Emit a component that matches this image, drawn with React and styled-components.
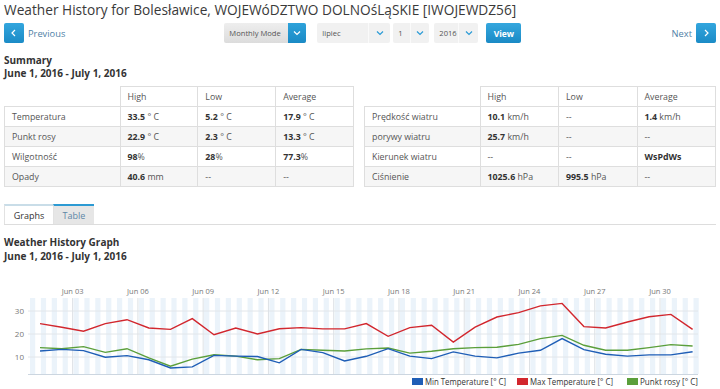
import React from "react";
import styled, { createGlobalStyle } from "styled-components";

const GlobalStyle = createGlobalStyle`
  body {
    margin: 0;
    background: #fff;
    font-family: "Open Sans", "Liberation Sans", sans-serif;
    color: #333;
  }
`;

const Page = styled.div`
  width: 720px;
  height: 389px;
  overflow: hidden;
  padding: 0 4px;
  box-sizing: border-box;
`;

const Title = styled.h1`
  margin: 0;
  font-size: 13.7px;
  line-height: 20px;
  font-weight: 400;
  color: #3a3a3a;
  white-space: nowrap;
`;

const NavRow = styled.div`
  display: flex;
  align-items: center;
  height: 20px;
  margin-top: 3px;
`;

const PageLink = styled.a`
  display: flex;
  align-items: center;
  gap: 4px;
  font-size: 9.3px;
  color: #4f7fa6;
  text-decoration: none;
  margin-left: ${(p) => (p.$right ? "auto" : "0")};
`;

const ArrowButton = styled.span`
  width: 20px;
  height: 20px;
  border-radius: 2px;
  background: linear-gradient(#33a6de, #1b8bc6);
  display: flex;
  align-items: center;
  justify-content: center;
`;

const Controls = styled.div`
  display: flex;
  align-items: center;
  margin-left: 159px;
  height: 20px;
`;

const Select = styled.div`
  display: flex;
  align-items: center;
  height: 20px;
  width: ${(p) => p.$w}px;
  margin-left: ${(p) => p.$gap || 0}px;
  border-radius: 2px;
  background: ${(p) => (p.$dark ? "linear-gradient(#eeeeee, #dcdcdc)" : "#f1f1f1")};
  font-size: 7.6px;
  color: #555;
  overflow: hidden;
`;

const SelectText = styled.span`
  flex: 1;
  padding-left: ${(p) => p.$pad || 5}px;
  white-space: nowrap;
`;

const Caret = styled.span`
  width: ${(p) => p.$w || 18}px;
  flex: none;
  height: 20px;
  display: flex;
  align-items: center;
  justify-content: center;
  background: ${(p) => (p.$solid ? "linear-gradient(#2ea2da, #1a8ac5)" : "transparent")};
  border-left: ${(p) => (p.$solid ? "none" : "1px solid #fafafa")};
`;

const ViewButton = styled.button`
  margin-left: 8px;
  height: 20px;
  width: 35px;
  border: none;
  border-radius: 2px;
  background: linear-gradient(#35a7de, #1a8ac5);
  color: #fff;
  font-family: inherit;
  font-weight: 700;
  font-size: 8.5px;
  padding: 0;
`;

const Heading = styled.div`
  margin-top: ${(p) => p.$top || 0}px;
  font-size: 10px;
  line-height: ${(p) => p.$lh || 13}px;
  font-weight: 700;
  color: #333;
`;

const Tables = styled.div`
  display: flex;
  justify-content: space-between;
  margin-top: 6px;
`;

const Table = styled.table`
  border-collapse: collapse;
  width: ${(p) => p.$w}px;
  table-layout: fixed;
  font-size: 8.8px;
  color: #555;

  th,
  td {
    height: 19px;
    padding: 0 0 0 7px;
    border: 1px solid #dedede;
    text-align: left;
    font-weight: 400;
    white-space: nowrap;
  }

  th:first-child {
    border: none;
    width: 108px;
  }

  tbody tr:nth-child(even) td {
    background: #f6f6f6;
  }

  b {
    color: #333;
    font-weight: 700;
  }
`;

const TabBar = styled.div`
  display: flex;
  margin-top: 17px;
  height: 20px;
  border-bottom: 1px solid #dddddd;
`;

const Tab = styled.div`
  width: ${(p) => p.$w}px;
  display: flex;
  align-items: center;
  justify-content: center;
  font-size: 9px;
  border-top: 2px solid ${(p) => (p.$active ? "#c9dde8" : "#2c9ad3")};
  border-left: 1px solid #e2e2e2;
  background: ${(p) => (p.$active ? "#fff" : "#e6e6e6")};
  color: ${(p) => (p.$active ? "#333" : "#5d87a6")};
`;

const Chart = styled.svg`
  display: block;
  margin: 7px 0 0 -4px;
  width: 720px;
  height: 121px;
  font-family: "Open Sans", "Liberation Sans", sans-serif;
`;

const Chevron = ({ dir, color = "#fff", size = 8 }) => {
  const pts = {
    left: "5,1 2,4 5,7",
    right: "3,1 6,4 3,7",
    down: "1,2.5 4,5.5 7,2.5",
  }[dir];
  return (
    <svg width={size} height={size} viewBox="0 0 8 8">
      <polyline points={pts} fill="none" stroke={color} strokeWidth="1.2" />
    </svg>
  );
};

const leftRows = [
  ["Temperatura", ["33.5", " ° C"], ["5.2", " ° C"], ["17.9", " ° C"]],
  ["Punkt rosy", ["22.9", " ° C"], ["2.3", " ° C"], ["13.3", " ° C"]],
  ["Wilgotność", ["98", "%"], ["28", "%"], ["77.3", "%"]],
  ["Opady", ["40.6", " mm"], null, null],
];

const rightRows = [
  ["Prędkość wiatru", ["10.1", " km/h"], null, ["1.4", " km/h"]],
  ["porywy wiatru", ["25.7", " km/h"], null, null],
  ["Kierunek wiatru", null, null, ["WsPdWs", ""]],
  ["Ciśnienie", ["1025.6", " hPa"], ["995.5", " hPa"], null],
];

const Cell = ({ v }) =>
  v ? (
    <td>
      <b>{v[0]}</b>
      {v[1]}
    </td>
  ) : (
    <td>--</td>
  );

const Summary = ({ rows, w }) => (
  <Table $w={w}>
    <thead>
      <tr>
        <th></th>
        <th>High</th>
        <th>Low</th>
        <th>Average</th>
      </tr>
    </thead>
    <tbody>
      {rows.map((r) => (
        <tr key={r[0]}>
          <td>{r[0]}</td>
          <Cell v={r[1]} />
          <Cell v={r[2]} />
          <Cell v={r[3]} />
        </tr>
      ))}
    </tbody>
  </Table>
);

const maxT = [24.5, 22.9, 21.2, 24.5, 26.2, 22.6, 22.0, 26.7, 19.7, 22.6, 20.0, 22.3, 22.8, 22.2, 22.2, 24.5, 19.0, 22.8, 23.8, 16.5, 23.0, 27.4, 29.3, 32.2, 33.3, 23.2, 22.6, 25.2, 27.5, 28.5, 22.0];
const minT = [12.6, 13.3, 12.8, 9.9, 10.6, 8.8, 5.2, 5.7, 10.7, 10.4, 10.2, 7.5, 13.3, 11.9, 8.3, 10.3, 13.6, 10.4, 9.3, 12.2, 10.4, 9.6, 11.7, 12.9, 18.0, 13.2, 11.2, 10.4, 10.9, 10.9, 12.3];
const dew = [14.1, 13.6, 14.5, 12.0, 13.6, 9.6, 6.0, 9.1, 11.0, 10.4, 8.8, 9.3, 13.3, 12.9, 12.6, 13.5, 13.9, 11.7, 12.5, 13.6, 14.1, 14.2, 15.5, 18.0, 19.4, 15.1, 12.9, 12.9, 14.1, 15.4, 14.8];

const STEP = 21.755;
const px = (i) => 40 + STEP * i;
const py = (v) => 378 - 2.3 * v;
const line = (d) => d.map((v, i) => `${px(i).toFixed(1)},${py(v).toFixed(1)}`).join(" ");

const PLOT = { x0: 28, x1: 698, y0: 296, y1: 372 };

const WeatherChart = () => {
  const stripes = [];
  for (let x = PLOT.x0 + 2; x < PLOT.x1; x += STEP / 2) {
    stripes.push(
      <rect key={x} x={x} y={PLOT.y0} width={5.2} height={PLOT.y1 - PLOT.y0} fill="#ebf3fa" />
    );
  }
  const ticks = [3, 6, 9, 12, 15, 18, 21, 24, 27, 30];
  const legend = [
    { x: 412, c: "#1f5eb6", t: "Min Temperature [° C]", w: 81 },
    { x: 517, c: "#d2272e", t: "Max Temperature [° C]", w: 83 },
    { x: 627, c: "#5b9f3b", t: "Punkt rosy [° C]", w: 58 },
  ];
  return (
    <Chart viewBox="0 268 720 121">
      {stripes}
      {[309, 332, 355].map((y) => (
        <line key={y} x1={PLOT.x0} x2={PLOT.x1} y1={y} y2={y} stroke="#e2e6ea" />
      ))}
      {ticks.map((d) => {
        const x = px(d - 1.5);
        return (
          <g key={d}>
            <line x1={x} x2={x} y1={PLOT.y0} y2={PLOT.y1} stroke="#dde1e5" />
            <text x={x} y={292} fontSize="7.5" fill="#777" textAnchor="middle">
              Jun {String(d).padStart(2, "0")}
            </text>
          </g>
        );
      })}
      <line x1={PLOT.x0} x2={PLOT.x1} y1={PLOT.y1 + 0.5} y2={PLOT.y1 + 0.5} stroke="#ccd6e0" />
      {[30, 20, 10].map((v) => (
        <text key={v} x={24} y={py(v) + 3} fontSize="8" fill="#777" textAnchor="end">
          {v}
        </text>
      ))}
      <polyline points={line(maxT)} fill="none" stroke="#d2272e" strokeWidth="1.4" />
      <polyline points={line(dew)} fill="none" stroke="#5b9f3b" strokeWidth="1.4" />
      <polyline points={line(minT)} fill="none" stroke="#1f5eb6" strokeWidth="1.4" />
      {legend.map((l) => (
        <g key={l.t}>
          <rect x={l.x} y={376} width={11} height={7} fill={l.c} />
          <text
            x={l.x + 13}
            y={382.5}
            fontSize="8.2"
            fill="#333"
            textLength={l.w}
            lengthAdjust="spacingAndGlyphs"
          >
            {l.t}
          </text>
        </g>
      ))}
    </Chart>
  );
};

const App = () => (
  <Page>
    <GlobalStyle />
    <Title>Weather History for Bolesławice, WOJEWóDZTWO DOLNOśLąSKIE [IWOJEWDZ56]</Title>
    <NavRow>
      <PageLink href="#">
        <ArrowButton>
          <Chevron dir="left" />
        </ArrowButton>
        Previous
      </PageLink>
      <Controls>
        <Select $w={82} $dark>
          <SelectText>Monthly Mode</SelectText>
          <Caret $solid>
            <Chevron dir="down" />
          </Caret>
        </Select>
        <Select $w={73} $gap={11}>
          <SelectText>lipiec</SelectText>
          <Caret $w={21}>
            <Chevron dir="down" color="#2a9bd6" />
          </Caret>
        </Select>
        <Select $w={36} $gap={3}>
          <SelectText>1</SelectText>
          <Caret $w={18}>
            <Chevron dir="down" color="#2a9bd6" />
          </Caret>
        </Select>
        <Select $w={44} $gap={5}>
          <SelectText>2016</SelectText>
          <Caret $w={19}>
            <Chevron dir="down" color="#2a9bd6" />
          </Caret>
        </Select>
        <ViewButton>View</ViewButton>
      </Controls>
      <PageLink href="#" $right>
        Next
        <ArrowButton>
          <Chevron dir="right" />
        </ArrowButton>
      </PageLink>
    </NavRow>
    <Heading $top={11}>Summary</Heading>
    <Heading>June 1, 2016 - July 1, 2016</Heading>
    <Tables>
      <Summary rows={leftRows} w={350} />
      <Summary rows={rightRows} w={352} />
    </Tables>
    <TabBar>
      <Tab $w={48} $active>
        Graphs
      </Tab>
      <Tab $w={40}>Table</Tab>
    </TabBar>
    <Heading $top={10} $lh={14}>
      Weather History Graph
    </Heading>
    <Heading $lh={14}>June 1, 2016 - July 1, 2016</Heading>
    <WeatherChart />
  </Page>
);

export default App;
